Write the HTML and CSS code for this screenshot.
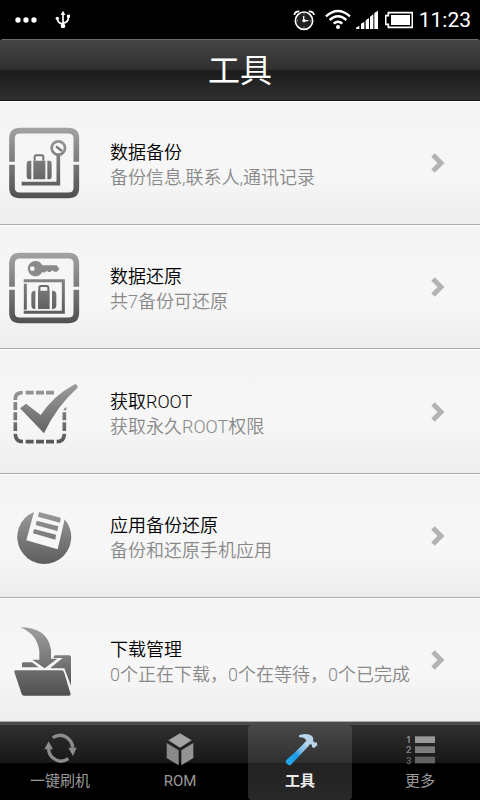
FILE: index.html
```
<!DOCTYPE html>
<html lang="zh-CN">
<head>
    <meta charset="UTF-8">
    <meta name="viewport" content="width=device-width, initial-scale=1.0">
    <title>工具</title>
    <link rel="stylesheet" href="styles.css">
</head>
<body>
    <!-- Status bar -->
    <div class="status-bar">
        <div class="status-left">
            <svg width="22" height="8" viewBox="47 43 66 24" fill="#fff" aria-hidden="true">
                <circle cx="56" cy="55" r="8"/><circle cx="80" cy="55" r="8"/><circle cx="104" cy="55" r="8"/>
            </svg>
            <svg width="16" height="20" viewBox="165 27 48 60" aria-hidden="true">
                <path d="M189 38V75M172 53Q173 67 189 69M205 48Q206 63 189 67" fill="none" stroke="#fff" stroke-width="5"/>
                <path d="M189 29L196 42H182Z" fill="#fff"/>
                <rect x="201" y="41" width="9" height="9" fill="#fff"/>
                <circle cx="172" cy="52" r="5" fill="#fff"/><circle cx="189" cy="75" r="7" fill="#fff"/>
            </svg>
        </div>
        <div class="status-right">
            <svg width="22" height="22" viewBox="165 27 66 66" aria-hidden="true">
                <circle cx="198" cy="62" r="26" fill="#222" stroke="#fff" stroke-width="5"/>
                <path d="M169 45Q170 34 184 34M212 34Q227 34 228 45" fill="none" stroke="#fff" stroke-width="5"/>
                <path d="M197 48V62H211" fill="none" stroke="#fff" stroke-width="4"/>
                <circle cx="198" cy="62" r="5" fill="#fff"/>
                <path d="M198 41v3M198 80v3M177 62h3M216 62h3" stroke="#aaa" stroke-width="3"/>
            </svg>
            <svg width="26" height="22" viewBox="261 27 78 66" aria-hidden="true">
                <path d="M264 49Q300 17 336 49M275 60Q300 38 325 60M287 71Q300 60 313 71" fill="none" stroke="#fff" stroke-width="7"/>
                <circle cx="300" cy="81" r="6" fill="#fff"/>
            </svg>
            <svg width="24" height="22" viewBox="342 27 72 66" fill="#fff" aria-hidden="true">
                <path d="M345 87V83L355 77V87ZM360 87V71L370 65V87ZM374 87V61L384 54V87ZM387 87V50L397 43V87ZM400 87V39L411 32V87Z"/>
            </svg>
            <svg class="battery" width="28" height="22" viewBox="435 27 84 66" aria-hidden="true">
                <path d="M445 38H517V82H445V73H437V47H445Z" fill="none" stroke="#fff" stroke-width="5"/>
                <rect x="453" y="45" width="57" height="30" fill="#fff"/>
            </svg>
            <span class="clock">11:23</span>
        </div>
    </div>

    <header class="title-bar">
        <h1>工具</h1>
    </header>

    <!-- Tool list -->
    <main class="tool-list">
        <a class="tool-item" href="#backup">
            <svg class="tool-icon" viewBox="12 24 240 240" aria-hidden="true">
                <defs>
                    <linearGradient id="gray" gradientUnits="userSpaceOnUse" x1="0" y1="40" x2="0" y2="250">
                        <stop offset="0" stop-color="#a2a2a2"/>
                        <stop offset="1" stop-color="#505050"/>
                    </linearGradient>
                </defs>
                <path d="M36 140V70Q36 47 60 47H205Q229 47 229 70V140M36 149V218Q36 241 60 241H205Q229 241 229 218V149" fill="none" stroke="url(#gray)" stroke-width="17"/>
                <path d="M65 206H175V120" fill="none" stroke="url(#gray)" stroke-width="11"/>
                <circle cx="175" cy="99" r="20" fill="none" stroke="url(#gray)" stroke-width="8"/>
                <path d="M168 94L186 108" stroke="#777" stroke-width="7"/>
                <path d="M104 137V126Q104 121 109 121H125Q130 121 130 126V137" fill="none" stroke="#757575" stroke-width="6"/>
                <path d="M100 137H136V193H100ZM94 137V193H88Q80 193 80 183V147Q80 137 88 137ZM142 137V193H148Q155 193 155 183V147Q155 137 148 137Z" fill="url(#gray)"/>
            </svg>
            <span class="tool-text">
                <span class="tool-name">数据备份</span>
                <span class="tool-desc">备份信息,联系人,通讯记录</span>
            </span>
            <svg class="arrow" viewBox="0 0 16 24" aria-hidden="true"><path d="M3 4L11 12L3 20"/></svg>
        </a>
        <a class="tool-item" href="#restore">
            <svg class="tool-icon" viewBox="12 21 240 240" aria-hidden="true">
                <path d="M36 140V70Q36 47 60 47H205Q229 47 229 70V140M36 149V218Q36 241 60 241H205Q229 241 229 218V149" fill="none" stroke="url(#gray)" stroke-width="17"/>
                <path d="M106 63A23 23 0 0 1 127 76H170L178 86L171 95H162L157 91L151 96H145L140 92L134 98L127 96A23 23 0 1 1 106 63ZM97 79A7 7 0 1 0 97 93A7 7 0 1 0 97 79Z" fill="#8a8a8a" fill-rule="evenodd"/>
                <path d="M71 122H190V217H71M76 131V209" fill="none" stroke="url(#gray)" stroke-width="9"/>
                <path d="M118 153V143Q118 138 123 138H140Q145 138 145 143V153" fill="none" stroke="#6c6c6c" stroke-width="6"/>
                <path d="M114 152H149V207H114ZM106 152V207H102Q94 205 94 196V163Q94 154 102 152ZM156 152V207H160Q169 205 169 196V163Q169 154 160 152Z" fill="url(#gray)"/>
            </svg>
            <span class="tool-text">
                <span class="tool-name">数据还原</span>
                <span class="tool-desc">共7备份可还原</span>
            </span>
            <svg class="arrow" viewBox="0 0 16 24" aria-hidden="true"><path d="M3 4L11 12L3 20"/></svg>
        </a>
        <a class="tool-item" href="#root">
            <svg class="tool-icon" viewBox="12 18 240 240" aria-hidden="true">
                <path d="M46 102V98Q46 80 68 80M77 80H101M108 80H132M138 80H162M46 108V132M46 139V163M46 169V195M46 203Q46 227 69 227M77 227H101M108 227H132M138 227H162M170 227Q193 227 193 203M193 195V169M193 163V139" fill="none" stroke="url(#gray)" stroke-width="11"/>
                <path d="M191 133V130L199 122V133Z" fill="#888"/>
                <path d="M60 127L78 113L122 147Q160 90 224 55Q233 54 233 65Q170 120 132 202Z" fill="url(#gray)"/>
            </svg>
            <span class="tool-text">
                <span class="tool-name">获取ROOT</span>
                <span class="tool-desc">获取永久ROOT权限</span>
            </span>
            <svg class="arrow" viewBox="0 0 16 24" aria-hidden="true"><path d="M3 4L11 12L3 20"/></svg>
        </a>
        <a class="tool-item" href="#apps">
            <svg class="tool-icon" viewBox="12 15 240 240" aria-hidden="true">
                <path d="M102 63A81 81 0 1 0 194 85L173 175L79 148Z" fill="url(#gray)"/>
                <path d="M117 63L182 80L180 95L114 77ZM110 89L175 106L172 120L107 102ZM102 114L168 131L166 146L99 127Z" fill="url(#gray)"/>
            </svg>
            <span class="tool-text">
                <span class="tool-name">应用备份还原</span>
                <span class="tool-desc">备份和还原手机应用</span>
            </span>
            <svg class="arrow" viewBox="0 0 16 24" aria-hidden="true"><path d="M3 4L11 12L3 20"/></svg>
        </a>
        <a class="tool-item" href="#downloads">
            <svg class="tool-icon" viewBox="12 27 240 240" aria-hidden="true">
                <path d="M61 49Q142 49 153 116V143H172L134 172L97 146H118V120Q112 70 61 49Z" fill="url(#gray)"/>
                <path d="M66 157Q66 154 71 154H96L116 169H66ZM161 137Q163 133 168 133H207Q213 133 213 139V224L193 172H150L188 141H161Z" fill="url(#gray)"/>
                <path d="M46 178H185Q190 178 192 183L212 249Q212 254 207 254H72Q67 254 65 249L43 183Q42 178 46 178Z" fill="url(#gray)"/>
            </svg>
            <span class="tool-text">
                <span class="tool-name">下载管理</span>
                <span class="tool-desc">0个正在下载，0个在等待，0个已完成</span>
            </span>
            <svg class="arrow" viewBox="0 0 16 24" aria-hidden="true"><path d="M3 4L11 12L3 20"/></svg>
        </a>
    </main>

    <!-- Bottom tabs -->
    <nav class="tab-bar">
        <a class="tab" href="#flash">
            <svg class="tab-icon" viewBox="120 39 120 120" aria-hidden="true">
                <path d="M158 68Q184 52 205 71Q218 83 218 98M205 131Q181 147 159 129Q146 118 146 101" fill="none" stroke="#8c8c8c" stroke-width="10"/>
                <path d="M205 98H230L219 123ZM133 103H159L146 79Z" fill="#8c8c8c"/>
            </svg>
            <span>一键刷机</span>
        </a>
        <a class="tab" href="#rom">
            <svg class="tab-icon" viewBox="480 39 120 120" aria-hidden="true">
                <path d="M540 55L575 76L540 98L505 76Z" fill="#a3a3a3"/>
                <path d="M500 84L536 106V151L500 129Z" fill="#898989"/>
                <path d="M580 84L544 106V151L580 129Z" fill="#949494"/>
            </svg>
            <span>ROM</span>
        </a>
        <a class="tab active" href="#tools">
            <svg class="tab-icon" viewBox="120 39 120 120" aria-hidden="true">
                <defs>
                    <linearGradient id="handle" gradientUnits="userSpaceOnUse" x1="205" y1="80" x2="145" y2="145">
                        <stop offset="0" stop-color="#b9dcf3"/>
                        <stop offset=".4" stop-color="#7dbbe6"/>
                        <stop offset=".6" stop-color="#1c9be2"/>
                        <stop offset="1" stop-color="#24a9ee"/>
                    </linearGradient>
                </defs>
                <path d="M195 82L206 93L152 150Q147 152 143 148L138 143Q136 138 140 134L168 109Z" fill="url(#handle)"/>
                <path d="M177 61Q200 52 215 62Q222 69 219 79L226 83L230 81L232 91L222 99L216 96V89L209 88L204 95L193 84L199 77Q194 66 177 67Z" fill="#b8d5ec"/>
            </svg>
            <span>工具</span>
        </a>
        <a class="tab" href="#more">
            <svg class="tab-icon" viewBox="480 39 120 120" aria-hidden="true">
                <rect x="525" y="64" width="60" height="20" fill="#9a9a9a"/>
                <rect x="525" y="94" width="60" height="20" fill="#7d7d7d"/>
                <rect x="525" y="125" width="60" height="20" fill="#626262"/>
                <g class="list-numbers">
                    <text x="498" y="84" fill="#999">1</text>
                    <text x="498" y="115" fill="#888">2</text>
                    <text x="498" y="146" fill="#666">3</text>
                </g>
            </svg>
            <span>更多</span>
        </a>
    </nav>
</body>
</html>
```

FILE: styles.css
```
* {
    margin: 0;
    padding: 0;
    box-sizing: border-box;
}

body {
    background: #000;
    display: flex;
    flex-direction: column;
    min-height: 100vh;
    font-family: Roboto, 'Noto Sans CJK SC', sans-serif;
}

svg {
    display: block;
    flex-shrink: 0;
}

a {
    text-decoration: none;
}

.status-bar {
    display: flex;
    justify-content: space-between;
    align-items: center;
    height: 39px;
    padding: 0 9px 0 15px;
    color: #fff;
}

.status-left {
    display: flex;
    align-items: center;
    gap: 18px;
}

.status-right {
    display: flex;
    align-items: center;
    gap: 4px;
}

.battery {
    margin-left: 2px;
}

.status-right svg:first-child {
    margin-right: 6px;
}

.clock {
    margin-left: 2px;
    font-size: 21px;
    line-height: 38px;
}

.title-bar {
    height: 62px;
    border-top: 1px solid #6a6a6a;
    border-bottom: 1px solid #111;
    border-radius: 3px 3px 0 0;
    background: linear-gradient(#464646, #2e2e2e 50%, #1b1b1b 51%, #303030);
    text-align: center;
}

.title-bar h1 {
    color: #fff;
    font-size: 32px;
    font-weight: 400;
    line-height: 62px;
}

.tool-list {
    flex: 1;
    display: flex;
    flex-direction: column;
}

.tool-item {
    flex: 1;
    display: flex;
    align-items: center;
    padding: 0 34px 0 4px;
    border-top: 1px solid #fff;
    border-bottom: 1px solid #aaa;
    background: linear-gradient(#f4f4f4, #f7f7f7 60%, #ededed);
}

.tool-icon {
    width: 80px;
    height: 80px;
    margin-right: 26px;
}

.tool-text {
    flex: 1;
    display: flex;
    flex-direction: column;
    padding-top: 4px;
    font-size: 18px;
    font-weight: 350;
    line-height: 25px;
}

.tool-name {
    color: #000;
}

.tool-desc {
    color: #888;
}

.arrow {
    width: 16px;
    height: 24px;
    fill: none;
    stroke: #b3b3b3;
    stroke-width: 5;
}

.tab-bar {
    display: flex;
    height: 78px;
    border-top: 3px solid #4c4c4c;
    background: linear-gradient(#303030, #171717 38px, #000 38px);
}

.tab {
    flex: 1;
    display: flex;
    flex-direction: column;
    align-items: center;
    gap: 2px;
    margin: 0 8px;
    padding-top: 3px;
    color: #999;
    font-size: 15px;
    line-height: 22px;
}

.tab.active {
    border-radius: 4px;
    background: linear-gradient(#484848, #303030 38px, #222 38px, #282828);
    color: #eee;
    font-weight: bold;
}

.tab-icon {
    width: 40px;
    height: 40px;
}

.list-numbers {
    font-size: 29px;
    font-weight: 500;
}
```
